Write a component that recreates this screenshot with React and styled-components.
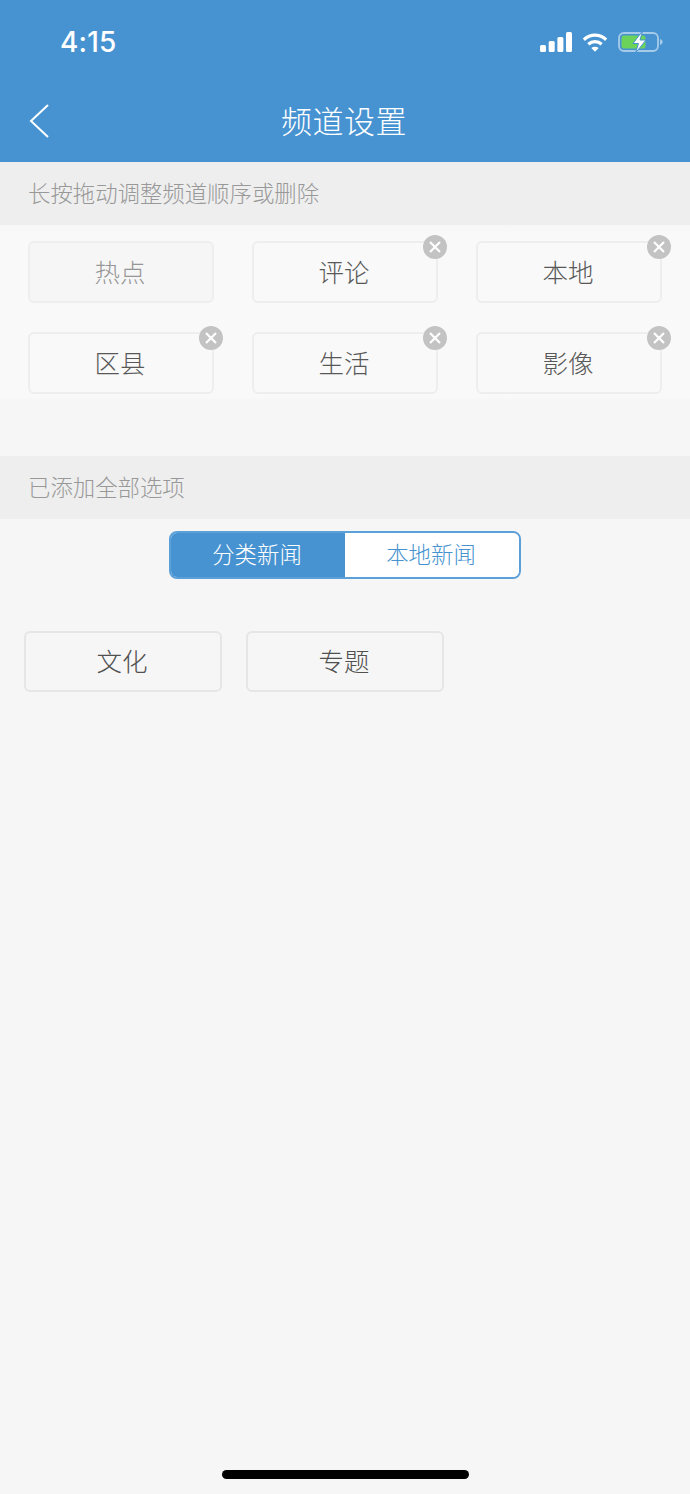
import styled, { createGlobalStyle } from "styled-components";

const GlobalStyle = createGlobalStyle`
  html, body {
    margin: 0;
    padding: 0;
    background: #f6f6f6;
  }
  * {
    box-sizing: border-box;
  }
`;

const fontStack = `"Noto Sans CJK SC", "Noto Sans", sans-serif`;

const Page = styled.div`
  width: 690px;
  height: 1494px;
  display: flex;
  flex-direction: column;
  background: #f6f6f6;
  font-family: ${fontStack};
  overflow: hidden;
`;

const Header = styled.header`
  height: 162px;
  flex-shrink: 0;
  background: #4793d1;
  display: flex;
  flex-direction: column;
`;

const StatusBar = styled.div`
  height: 82px;
  padding: 2px 27px 0 60px;
  display: flex;
  align-items: center;
  justify-content: space-between;
`;

const Clock = styled.span`
  color: #fff;
  font-family: "Inter", "Liberation Sans", sans-serif;
  font-size: 28px;
  font-weight: 500;
  letter-spacing: 0.2px;
`;

const StatusIcons = styled.div`
  display: flex;
  align-items: center;
  gap: 10px;
`;

const NavBar = styled.div`
  flex: 1;
  display: grid;
  grid-template-columns: 1fr auto 1fr;
  align-items: center;
  padding: 0 30px 6px 28px;
`;

const BackSvg = styled.svg`
  margin-top: 3px;
`;

const Title = styled.h1`
  margin: 0;
  color: #fff;
  font-size: 31px;
  font-weight: 300;
  letter-spacing: 0.5px;
`;

const SectionHead = styled.div`
  height: 63px;
  flex-shrink: 0;
  padding: 0 0 4px 28px;
  display: flex;
  align-items: center;
  background: #eeeeee;
  color: #989898;
  font-size: 22.4px;
  font-weight: 300;
`;

const MyChannels = styled.div`
  height: 176px;
  padding: 16px 28px 0;
  background: linear-gradient(#f6f6f6 0, #f9f9f9 10px, #f9f9f9 calc(100% - 4px), #f6f6f6 100%);
  display: grid;
  grid-template-columns: repeat(3, 186px);
  grid-auto-rows: 62px;
  column-gap: 38px;
  row-gap: 29px;
`;

const Spacer = styled.div`
  height: 55px;
  flex-shrink: 0;
`;

const Chip = styled.div`
  position: relative;
  display: flex;
  align-items: center;
  justify-content: center;
  padding: 0 2px 4px 0;
  border: 2px solid #eeeeee;
  border-radius: 6px;
  background: ${(p) => (p.$fixed ? "#f6f6f6" : "#f9f9f9")};
  color: ${(p) => (p.$fixed ? "#969696" : "#585858")};
  font-size: 25.5px;
  font-weight: 300;
`;

const RemoveBadge = styled.span`
  position: absolute;
  top: -8px;
  right: -11px;
  width: 24px;
  height: 24px;
  border-radius: 50%;
  background: #c3c3c3;
  display: flex;
  align-items: center;
  justify-content: center;
`;

const SegmentRow = styled.div`
  padding-top: 12px;
  display: flex;
  justify-content: center;
`;

const Segment = styled.div`
  width: 352px;
  height: 48px;
  display: grid;
  grid-template-columns: 1fr 1fr;
  border: 2px solid #5ba0d8;
  border-radius: 8px;
  overflow: hidden;
`;

const SegmentItem = styled.div`
  display: flex;
  align-items: center;
  justify-content: center;
  padding: 0 2px 4px 0;
  font-size: 22.4px;
  font-weight: 300;
  background: ${(p) => (p.$active ? "#4793d1" : "#ffffff")};
  color: ${(p) => (p.$active ? "#ffffff" : "#4793d1")};
`;

const MoreChannels = styled.div`
  padding: 52px 0 0 24px;
  display: flex;
  gap: 24px;
`;

const AddChip = styled(Chip)`
  width: 198px;
  height: 61px;
  border-color: #e6e6e6;
  background: #f6f6f6;
  color: #505050;
`;

const HomeBarRow = styled.div`
  margin-top: auto;
  padding-bottom: 15px;
  display: flex;
  justify-content: center;
`;

const HomeBar = styled.div`
  width: 247px;
  height: 9px;
  border-radius: 5px;
  background: #000;
`;

const SignalIcon = () => (
  <svg width="32" height="20" viewBox="0 0 32 20" fill="#fff">
    <rect x="0" y="13" width="6" height="7" rx="1.5" />
    <rect x="8.700" y="9" width="6" height="11" rx="1.5" />
    <rect x="17.400" y="5" width="6" height="15" rx="1.5" />
    <rect x="26" y="0" width="6" height="20" rx="1.5" />
  </svg>
);

const WifiIcon = () => (
  <svg width="26" height="21" viewBox="0 0 28 21" fill="none" stroke="#fff" strokeWidth="3.6">
    <path d="M2 7.500C9 1 19 1 26 7.500" />
    <path d="M6.800 12.300c4.200-3.700 10.200-3.700 14.400 0" />
    <path d="M14 20.500l-4-4.200c2.400-1.800 5.600-1.800 8 0z" fill="#fff" stroke="none" />
  </svg>
);

const BatteryIcon = () => (
  <svg width="45" height="22" viewBox="0 0 45 22" fill="none">
    <rect x="1" y="2" width="39" height="18" rx="5" stroke="#a6cbe8" strokeWidth="1.800" />
    <rect x="3.500" y="4.500" width="24" height="13" rx="2.500" fill="#6cd35a" />
    <path d="M42 8v6c1.600-.4 2.600-1.600 2.600-3S43.600 8.400 42 8z" fill="#a6cbe8" />
    <path d="M24.500 0L15 12.500h5.500L17.500 22 28 9h-6z" fill="#fff" stroke="#4793d1" strokeWidth="1" />
  </svg>
);

const BackIcon = () => (
  <BackSvg width="22" height="36" viewBox="0 0 22 36" fill="none" stroke="#fff" strokeWidth="2">
    <path d="M20 2L3 18l17 16" />
  </BackSvg>
);

const CrossIcon = () => (
  <svg width="12" height="12" viewBox="0 0 12 12" stroke="#fff" strokeWidth="2.200">
    <path d="M1 1l10 10M11 1L1 11" />
  </svg>
);

const channels = [
  { name: "热点", fixed: true },
  { name: "评论" },
  { name: "本地" },
  { name: "区县" },
  { name: "生活" },
  { name: "影像" },
];

const extraChannels = ["文化", "专题"];

export default function App() {
  return (
    <>
      <GlobalStyle />
      <Page>
        <Header>
          <StatusBar>
            <Clock>4:15</Clock>
            <StatusIcons>
              <SignalIcon />
              <WifiIcon />
              <BatteryIcon />
            </StatusIcons>
          </StatusBar>
          <NavBar>
            <BackIcon />
            <Title>频道设置</Title>
          </NavBar>
        </Header>

        <SectionHead>长按拖动调整频道顺序或删除</SectionHead>
        <MyChannels>
          {channels.map((c) => (
            <Chip key={c.name} $fixed={c.fixed}>
              {c.name}
              {!c.fixed && (
                <RemoveBadge>
                  <CrossIcon />
                </RemoveBadge>
              )}
            </Chip>
          ))}
        </MyChannels>
        <Spacer />

        <SectionHead>已添加全部选项</SectionHead>
        <SegmentRow>
          <Segment>
            <SegmentItem $active>分类新闻</SegmentItem>
            <SegmentItem>本地新闻</SegmentItem>
          </Segment>
        </SegmentRow>
        <MoreChannels>
          {extraChannels.map((name) => (
            <AddChip key={name}>{name}</AddChip>
          ))}
        </MoreChannels>

        <HomeBarRow>
          <HomeBar />
        </HomeBarRow>
      </Page>
    </>
  );
}
